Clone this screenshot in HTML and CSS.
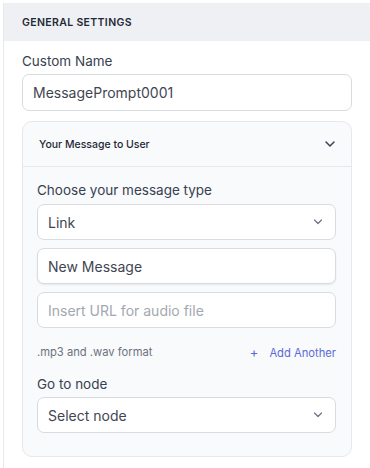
FILE: index.html
```html
<!DOCTYPE html>
<html>
<head>
<meta charset="utf-8">
<link rel="stylesheet" href="styles.css">
</head>
<body>
<div class="panel">
  <div class="panel-header">GENERAL SETTINGS</div>
  <div class="panel-body">
    <label class="label">Custom Name</label>
    <div class="input">MessagePrompt0001</div>

    <div class="card">
      <div class="card-header">
        <span class="card-title">Your Message to User</span>
        <svg class="chev-lg" width="12" height="8" viewBox="0 0 12 8"><path d="M2 2l4 4 4-4" fill="none" stroke="#374151" stroke-width="1.5" stroke-linecap="round" stroke-linejoin="round"/></svg>
      </div>
      <div class="card-body">
        <label class="label">Choose your message type</label>
        <div class="input select">
          <span>Link</span>
          <svg width="10" height="6" viewBox="0 0 10 6"><path d="M1.5 1l3.5 3.5L8.5 1" fill="none" stroke="#6b7280" stroke-width="1.2" stroke-linecap="round" stroke-linejoin="round"/></svg>
        </div>
        <div class="input shadow field-gap">New Message</div>
        <div class="input placeholder field-gap-sm">Insert URL for audio file</div>
        <div class="helper-row">
          <span class="helper">.mp3 and .wav format</span>
          <span class="add"><span class="plus">+</span>Add Another</span>
        </div>
        <label class="label node-label">Go to node</label>
        <div class="input select">
          <span>Select node</span>
          <svg width="10" height="6" viewBox="0 0 10 6"><path d="M1.5 1l3.5 3.5L8.5 1" fill="none" stroke="#6b7280" stroke-width="1.2" stroke-linecap="round" stroke-linejoin="round"/></svg>
        </div>
      </div>
    </div>
  </div>
</div>
</body>
</html>
```

FILE: styles.css
```css
* { box-sizing: border-box; }
html, body { margin: 0; padding: 0; background: #ffffff; }
body {
  font-family: Inter, "Noto Sans", sans-serif;
  color: #374151;
  height: 468px;
  overflow: hidden;
}
.panel {
  margin: 3px 0 0 3px;
  border-left: 1px solid #e7e9ec;
  min-height: 465px;
}
.panel-header {
  height: 38px;
  background: #eef0f3;
  display: flex;
  align-items: center;
  padding-left: 18px;
  font-size: 10.5px;
  font-weight: 600;
  letter-spacing: 0.35px;
  color: #1f2937;
}
.panel-body {
  padding: 10px 18px 0 18px;
}
.label {
  display: block;
  font-size: 13.5px;
  line-height: 20px;
  color: #374151;
  margin-bottom: 3px;
}
.input {
  height: 37px;
  border: 1px solid #d8dbe0;
  border-radius: 7px;
  background: #fff;
  display: flex;
  align-items: center;
  padding: 0 10px;
  font-size: 14px;
  color: #3f4652;
}
.card {
  margin-top: 10px;
  border: 1px solid #e6e8ec;
  border-radius: 10px;
  background: #f9fafb;
  height: 336px;
}
.card-header {
  height: 45px;
  border-bottom: 1px solid #e6e8ec;
  display: flex;
  align-items: center;
  justify-content: space-between;
  padding: 0 15px 0 16px;
}
.card-title {
  font-size: 10.5px;
  font-weight: 500;
  color: #1f2937;
}
.card-body {
  padding: 13px 15px 0 14px;
}
.card-body .label { margin-bottom: 4px; }
.select {
  height: 36px;
  justify-content: space-between;
  padding: 0 12px 0 10px;
}
.shadow {
  height: 36px;
  box-shadow: 0 1px 2px rgba(0,0,0,0.08);
}
.field-gap { margin-top: 8px; }
.field-gap-sm { margin-top: 8px; height: 36px; }
.placeholder { color: #a3a8b0; }
.helper-row {
  display: flex;
  justify-content: space-between;
  align-items: center;
  margin-top: 16px;
  height: 16px;
}
.helper {
  font-size: 11.2px;
  color: #6b7280;
}
.add {
  font-size: 11.2px;
  color: #5b6bd6;
  font-weight: 400;
}
.plus {
  margin-right: 11px;
  font-size: 13px;
}
.card-body .node-label { margin-top: 14px; margin-bottom: 3px; }
```
